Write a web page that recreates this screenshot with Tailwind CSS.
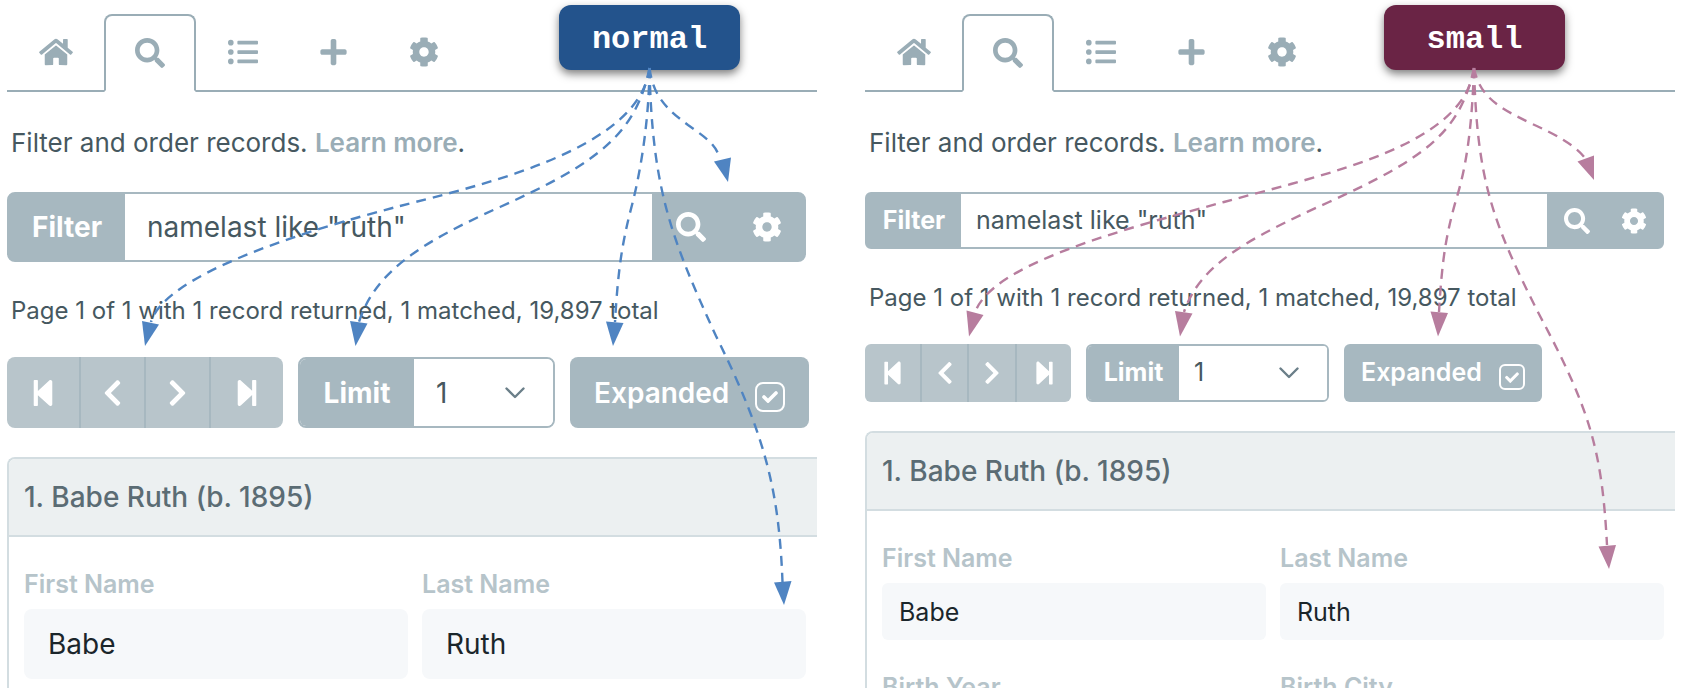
<!DOCTYPE html>
<html lang="en">
<head>
<meta charset="utf-8">
<title>Filter and order records: normal and small sizes</title>
<meta name="viewport" content="width=device-width, initial-scale=1">
<script src="https://cdn.jsdelivr.net/npm/@tailwindcss/browser@4"></script>
</head>
<body class="bg-white font-['Inter',sans-serif] text-[#465860]">

<svg class="hidden" aria-hidden="true">
  <symbol id="home" viewBox="0 0 576 512"><path d="M280.37 148.26L96 300.11V464a16 16 0 0 0 16 16l112.06-.29a16 16 0 0 0 15.92-16V368a16 16 0 0 1 16-16h64a16 16 0 0 1 16 16v95.64a16 16 0 0 0 16 16.05L464 480a16 16 0 0 0 16-16V300L295.67 148.26a12.19 12.19 0 0 0-15.3 0zM571.6 251.47L488 182.56V44.05a12 12 0 0 0-12-12h-56a12 12 0 0 0-12 12v72.61L318.47 43a48 48 0 0 0-61 0L4.34 251.47a12 12 0 0 0-1.6 16.9l25.5 31A12 12 0 0 0 45.15 301l235.22-193.74a12.19 12.19 0 0 1 15.3 0L530.9 301a12 12 0 0 0 16.9-1.6l25.5-31a12 12 0 0 0-1.7-16.93z"/></symbol>
  <symbol id="search" viewBox="0 0 512 512"><path d="M505 442.7L405.3 343c-4.5-4.5-10.6-7-17-7H372c27.6-35.3 44-79.7 44-128C416 93.1 322.9 0 208 0S0 93.1 0 208s93.1 208 208 208c48.3 0 92.7-16.4 128-44v16.3c0 6.4 2.5 12.5 7 17l99.7 99.7c9.4 9.4 24.6 9.4 33.9 0l28.3-28.3c9.4-9.4 9.4-24.6.1-34zM208 336c-70.7 0-128-57.2-128-128 0-70.7 57.2-128 128-128 70.7 0 128 57.2 128 128 0 70.7-57.2 128-128 128z"/></symbol>
  <symbol id="list" viewBox="0 0 512 512"><path d="M48 48a48 48 0 1 0 48 48 48 48 0 0 0-48-48zm0 160a48 48 0 1 0 48 48 48 48 0 0 0-48-48zm0 160a48 48 0 1 0 48 48 48 48 0 0 0-48-48zm448 16H176a16 16 0 0 0-16 16v32a16 16 0 0 0 16 16h320a16 16 0 0 0 16-16v-32a16 16 0 0 0-16-16zm0-320H176a16 16 0 0 0-16 16v32a16 16 0 0 0 16 16h320a16 16 0 0 0 16-16V80a16 16 0 0 0-16-16zm0 160H176a16 16 0 0 0-16 16v32a16 16 0 0 0 16 16h320a16 16 0 0 0 16-16v-32a16 16 0 0 0-16-16z"/></symbol>
  <symbol id="plus" viewBox="0 0 448 512"><path d="M416 208H272V64c0-17.67-14.33-32-32-32h-32c-17.67 0-32 14.33-32 32v144H32c-17.67 0-32 14.33-32 32v32c0 17.67 14.33 32 32 32h144v144c0 17.67 14.33 32 32 32h32c17.67 0 32-14.33 32-32V304h144c17.67 0 32-14.33 32-32v-32c0-17.67-14.33-32-32-32z"/></symbol>
  <symbol id="cog" viewBox="0 0 512 512"><path d="M487.4 315.7l-42.6-24.6c4.3-23.2 4.3-47 0-70.2l42.6-24.6c4.9-2.8 7.1-8.6 5.5-14-11.1-35.6-30-67.8-54.7-94.6-3.8-4.1-10-5.1-14.8-2.3L380.8 110c-17.9-15.4-38.5-27.3-60.8-35.1V25.8c0-5.6-3.9-10.5-9.4-11.7-36.7-8.2-74.3-7.8-109.2 0-5.5 1.2-9.4 6.1-9.4 11.7V75c-22.2 7.9-42.8 19.8-60.8 35.1L88.7 85.5c-4.9-2.8-11-1.9-14.8 2.3-24.7 26.7-43.6 58.9-54.7 94.6-1.7 5.4.6 11.2 5.5 14L67.3 221c-4.3 23.2-4.3 47 0 70.2l-42.6 24.6c-4.9 2.8-7.1 8.6-5.5 14 11.1 35.6 30 67.8 54.7 94.6 3.8 4.1 10 5.1 14.8 2.3l42.6-24.6c17.9 15.4 38.5 27.3 60.8 35.1v49.2c0 5.6 3.9 10.5 9.4 11.7 36.7 8.2 74.3 7.8 109.2 0 5.5-1.2 9.4-6.1 9.4-11.7v-49.2c22.2-7.9 42.8-19.8 60.8-35.1l42.6 24.6c4.9 2.8 11 1.9 14.8-2.3 24.7-26.7 43.6-58.9 54.7-94.6 1.5-5.5-.7-11.3-5.6-14.1zM256 336c-44.1 0-80-35.9-80-80s35.9-80 80-80 80 35.9 80 80-35.9 80-80 80z"/></symbol>
  <symbol id="first" viewBox="0 0 448 512"><path d="M64 468V44c0-6.6 5.4-12 12-12h48c6.6 0 12 5.4 12 12v176.4l195.5-181C352.1 22.3 384 36.6 384 64v384c0 27.4-31.9 41.7-52.5 24.6L136 292.7V468c0 6.6-5.4 12-12 12H76c-6.6 0-12-5.4-12-12z"/></symbol>
  <symbol id="prev" viewBox="0 0 320 512"><path d="M34.52 239.03L228.87 44.69c9.37-9.37 24.57-9.37 33.94 0l22.67 22.67c9.36 9.36 9.37 24.52.04 33.9L131.49 256l154.02 154.75c9.34 9.38 9.32 24.54-.04 33.9l-22.67 22.67c-9.37 9.37-24.57 9.37-33.94 0L34.52 272.97c-9.37-9.37-9.37-24.57 0-33.94z"/></symbol>
  <symbol id="next" viewBox="0 0 320 512"><path d="M285.476 272.971L91.132 467.314c-9.373 9.373-24.569 9.373-33.941 0l-22.667-22.667c-9.357-9.357-9.375-24.522-.04-33.901L188.505 256 34.484 101.255c-9.335-9.379-9.317-24.544.04-33.901l22.667-22.667c9.373-9.373 24.569-9.373 33.941 0L285.475 239.03c9.373 9.372 9.373 24.568.001 33.941z"/></symbol>
  <symbol id="last" viewBox="0 0 448 512"><path d="M384 44v424c0 6.6-5.4 12-12 12h-48c-6.6 0-12-5.4-12-12V291.6l-195.5 181C95.9 489.7 64 475.4 64 448V64c0-27.4 31.9-41.7 52.5-24.6L312 219.3V44c0-6.6 5.4-12 12-12h48c6.6 0 12 5.4 12 12z"/></symbol>
  <symbol id="down" viewBox="0 0 20 12"><path d="M1.5 1.5L10 10l8.500-8.500" fill="none" stroke="currentColor" stroke-width="2.400" stroke-linecap="round" stroke-linejoin="round"/></symbol>
  <symbol id="tick" viewBox="0 0 16 12"><path d="M2 6l4 4L14 2" fill="none" stroke="currentColor" stroke-width="3.600" stroke-linecap="round" stroke-linejoin="miter"/></symbol>
</svg>

<main class="relative flex h-screen gap-12 overflow-hidden pb-[6px] pl-[7px] pr-[7px]">

  <!-- Normal size -->
  <section class="min-w-0 flex-1 overflow-hidden pt-[14px]" aria-label="Normal size">
    <nav class="flex h-[78px] text-[#9aadb6]">
      <a href="#home" aria-label="Home" class="flex items-center border-b-2 border-current pl-8 pr-[31px]"><svg class="h-[30px] w-[34px] fill-current"><use href="#home"/></svg></a>
      <a href="#search" aria-label="Search" aria-current="page" class="flex items-center rounded-t-lg border-2 border-b-transparent border-current px-[29px]"><svg class="h-[30px] w-[30px] fill-current"><use href="#search"/></svg></a>
      <a href="#list" aria-label="List" class="flex items-center border-b-2 border-current pl-8 pr-[31px]"><svg class="h-[30px] w-[30px] fill-current"><use href="#list"/></svg></a>
      <a href="#add" aria-label="Add" class="flex items-center border-b-2 border-current px-[31px]"><svg class="h-[30px] w-[27px] fill-current"><use href="#plus"/></svg></a>
      <a href="#settings" aria-label="Settings" class="flex flex-1 items-center border-b-2 border-current px-[31px]"><svg class="h-[30px] w-[30px] fill-current"><use href="#cog"/></svg></a>
    </nav>

    <p class="mt-[31px] pl-1 text-[26px] leading-[40px]">Filter and order records. <a href="#learn" class="font-semibold text-[#9aadb6]">Learn more</a>.</p>

    <form class="mr-[11px] mt-[29px] flex h-[70px] overflow-hidden rounded-lg border-2 border-[#a7b8c0] bg-[#a7b8c0] text-[28px]">
      <label for="filter-normal" class="flex w-[116px] items-center justify-center font-bold text-white">Filter</label>
      <input id="filter-normal" type="text" value='namelast like "ruth"' class="min-w-0 flex-1 bg-white px-[22px]">
      <button type="button" aria-label="Search" class="flex w-[77px] items-center justify-center text-white"><svg class="h-[30px] w-[30px] fill-current"><use href="#search"/></svg></button>
      <button type="button" aria-label="Filter settings" class="flex w-[75px] items-center justify-center text-white"><svg class="h-[30px] w-[30px] fill-current"><use href="#cog"/></svg></button>
    </form>

    <p class="mt-[31px] pl-1 text-[24px] leading-[36px]">Page 1 of 1 with 1 record returned, 1 matched, 19,897 total</p>

    <div class="mt-[28px] flex h-[71px] gap-[15px] text-[28px]">
      <div class="flex divide-x-2 divide-[#a7b8c0] overflow-hidden rounded-lg bg-[#b8c5cb] text-white" role="group" aria-label="Pages">
        <button type="button" aria-label="First page" class="flex w-[74px] items-center justify-center"><svg class="h-[30px] w-[26px] fill-current"><use href="#first"/></svg></button>
        <button type="button" aria-label="Previous page" class="flex w-[65px] items-center justify-center"><svg class="h-[30px] w-[19px] fill-current"><use href="#prev"/></svg></button>
        <button type="button" aria-label="Next page" class="flex w-[65px] items-center justify-center"><svg class="h-[30px] w-[19px] fill-current"><use href="#next"/></svg></button>
        <button type="button" aria-label="Last page" class="flex w-[72px] items-center justify-center"><svg class="h-[30px] w-[26px] fill-current"><use href="#last"/></svg></button>
      </div>
      <div class="flex overflow-hidden rounded-lg border-2 border-[#a7b8c0]">
        <label for="limit-normal" class="flex w-[114px] items-center justify-center bg-[#a7b8c0] font-bold text-white">Limit</label>
        <div class="relative flex w-[139px] items-center bg-white">
          <select id="limit-normal" class="h-full w-full appearance-none pl-[22px]"><option>1</option><option>10</option></select>
          <svg class="pointer-events-none absolute right-7 h-3 w-5 text-[#6b7f89]"><use href="#down"/></svg>
        </div>
      </div>
      <label class="flex w-[239px] items-center justify-between rounded-lg bg-[#a7b8c0] pl-6 pr-[24px] font-semibold text-white">Expanded
        <span class="relative mt-2 flex items-center justify-center"><input type="checkbox" checked class="h-[30px] w-[30px] appearance-none rounded-lg border-2 border-white"><svg class="pointer-events-none absolute h-3 w-4"><use href="#tick"/></svg></span>
      </label>
    </div>

    <article class="mt-[29px] h-screen rounded-tl-lg border-l-2 border-t-2 border-[#d3dde1]">
      <h2 class="flex h-[78px] items-center rounded-tl-md border-b-2 border-[#d3dde1] bg-[#ecf0f1] pl-[15px] text-[28px] font-medium text-[#5b6c74]">1. Babe Ruth (b. 1895)</h2>
      <div class="grid grid-cols-2 gap-x-[14px] gap-y-[31px] pl-[15px] pr-[11px] pt-[31px]">
        <div><label for="first-normal" class="block text-[25px] font-semibold leading-8 text-[#b6c4ca]">First Name</label><input id="first-normal" type="text" readonly value="Babe" class="mt-[9px] h-[70px] w-full rounded-lg bg-[#f6f8fa] px-6 text-[28px] text-[#1b262b]"></div>
        <div><label for="last-normal" class="block text-[25px] font-semibold leading-8 text-[#b6c4ca]">Last Name</label><input id="last-normal" type="text" readonly value="Ruth" class="mt-[9px] h-[70px] w-full rounded-lg bg-[#f6f8fa] px-6 text-[28px] text-[#1b262b]"></div>
      </div>
    </article>
  </section>

  <!-- Small size -->
  <section class="min-w-0 flex-1 overflow-hidden pt-[14px]" aria-label="Small size">
    <nav class="flex h-[78px] text-[#9aadb6]">
      <a href="#home" aria-label="Home" class="flex items-center border-b-2 border-current pl-8 pr-[31px]"><svg class="h-[30px] w-[34px] fill-current"><use href="#home"/></svg></a>
      <a href="#search" aria-label="Search" aria-current="page" class="flex items-center rounded-t-lg border-2 border-b-transparent border-current px-[29px]"><svg class="h-[30px] w-[30px] fill-current"><use href="#search"/></svg></a>
      <a href="#list" aria-label="List" class="flex items-center border-b-2 border-current pl-8 pr-[31px]"><svg class="h-[30px] w-[30px] fill-current"><use href="#list"/></svg></a>
      <a href="#add" aria-label="Add" class="flex items-center border-b-2 border-current px-[31px]"><svg class="h-[30px] w-[27px] fill-current"><use href="#plus"/></svg></a>
      <a href="#settings" aria-label="Settings" class="flex flex-1 items-center border-b-2 border-current px-[31px]"><svg class="h-[30px] w-[30px] fill-current"><use href="#cog"/></svg></a>
    </nav>

    <p class="mt-[31px] pl-1 text-[26px] leading-[40px]">Filter and order records. <a href="#learn" class="font-semibold text-[#9aadb6]">Learn more</a>.</p>

    <form class="mr-[11px] mt-[29px] flex h-[57px] overflow-hidden rounded-md border-2 border-[#a7b8c0] bg-[#a7b8c0] text-[25px]">
      <label for="filter-small" class="flex w-[94px] items-center justify-center font-bold text-white">Filter</label>
      <input id="filter-small" type="text" value='namelast like "ruth"' class="min-w-0 flex-1 bg-white px-[15px]">
      <button type="button" aria-label="Search" class="flex w-[59px] items-center justify-center text-white"><svg class="h-[26px] w-[26px] fill-current"><use href="#search"/></svg></button>
      <button type="button" aria-label="Filter settings" class="flex w-[56px] items-center justify-center text-white"><svg class="h-[26px] w-[26px] fill-current"><use href="#cog"/></svg></button>
    </form>

    <p class="mt-[31px] pl-1 text-[24px] leading-[36px]">Page 1 of 1 with 1 record returned, 1 matched, 19,897 total</p>

    <div class="mt-[28px] flex h-[58px] gap-[15px] text-[25px]">
      <div class="flex divide-x-2 divide-[#a7b8c0] overflow-hidden rounded-md bg-[#b8c5cb] text-white" role="group" aria-label="Pages">
        <button type="button" aria-label="First page" class="flex w-[57px] items-center justify-center"><svg class="h-[26px] w-[23px] fill-current"><use href="#first"/></svg></button>
        <button type="button" aria-label="Previous page" class="flex w-[47px] items-center justify-center"><svg class="h-[26px] w-[16px] fill-current"><use href="#prev"/></svg></button>
        <button type="button" aria-label="Next page" class="flex w-[48px] items-center justify-center"><svg class="h-[26px] w-[16px] fill-current"><use href="#next"/></svg></button>
        <button type="button" aria-label="Last page" class="flex w-[54px] items-center justify-center"><svg class="h-[26px] w-[23px] fill-current"><use href="#last"/></svg></button>
      </div>
      <div class="flex overflow-hidden rounded-md border-2 border-[#a7b8c0]">
        <label for="limit-small" class="flex w-[91px] items-center justify-center bg-[#a7b8c0] font-bold text-white">Limit</label>
        <div class="relative flex w-[148px] items-center bg-white">
          <select id="limit-small" class="h-full w-full appearance-none pl-[15px]"><option>1</option><option>10</option></select>
          <svg class="pointer-events-none absolute right-7 h-3 w-5 text-[#6b7f89]"><use href="#down"/></svg>
        </div>
      </div>
      <label class="flex w-[198px] items-center justify-between rounded-md bg-[#a7b8c0] pl-[17px] pr-[17px] font-semibold text-white">Expanded
        <span class="relative mt-2 flex items-center justify-center"><input type="checkbox" checked class="h-[26px] w-[26px] appearance-none rounded-md border-2 border-white"><svg class="pointer-events-none absolute h-[11px] w-[14px]"><use href="#tick"/></svg></span>
      </label>
    </div>

    <article class="mt-[29px] h-screen rounded-tl-lg border-l-2 border-t-2 border-[#d3dde1]">
      <h2 class="flex h-[78px] items-center rounded-tl-md border-b-2 border-[#d3dde1] bg-[#ecf0f1] pl-[15px] text-[28px] font-medium text-[#5b6c74]">1. Babe Ruth (b. 1895)</h2>
      <div class="grid grid-cols-2 gap-x-[14px] gap-y-[31px] pl-[15px] pr-[11px] pt-[31px]">
        <div><label for="first-small" class="block text-[25px] font-semibold leading-8 text-[#b6c4ca]">First Name</label><input id="first-small" type="text" readonly value="Babe" class="mt-[9px] h-[57px] w-full rounded-md bg-[#f6f8fa] px-[17px] text-[25px] text-[#1b262b]"></div>
        <div><label for="last-small" class="block text-[25px] font-semibold leading-8 text-[#b6c4ca]">Last Name</label><input id="last-small" type="text" readonly value="Ruth" class="mt-[9px] h-[57px] w-full rounded-md bg-[#f6f8fa] px-[17px] text-[25px] text-[#1b262b]"></div>
        <div class="text-[25px] font-semibold leading-8 text-[#b6c4ca]">Birth Year</div>
        <div class="text-[25px] font-semibold leading-8 text-[#b6c4ca]">Birth City</div>
      </div>
    </article>
  </section>

  <!-- Callouts drawn over both panels -->
  <div class="absolute left-[559px] top-[5px] flex h-[65px] w-[181px] items-center justify-center rounded-xl bg-[#23538c] pt-1 font-['Liberation_Mono',monospace] text-[32px] font-bold text-white shadow-[0_4px_8px_rgba(0,0,0,0.5)]">normal</div>
  <div class="absolute left-[1384px] top-[5px] flex h-[65px] w-[181px] items-center justify-center rounded-xl bg-[#6a2445] pt-1 font-['Liberation_Mono',monospace] text-[32px] font-bold text-white shadow-[0_4px_8px_rgba(0,0,0,0.5)]">small</div>

  <svg class="pointer-events-none absolute inset-0 h-full w-full" aria-hidden="true">
    <g fill="none" stroke="#4f84c2" stroke-width="2.400" stroke-dasharray="10 7">
      <path d="M649.500 68C640 150 480 185 400 206C300 232 165 275 151 322"/>
      <path d="M649.500 68C636 133 600 162 500 207C420 243 375 272 359 322"/>
      <path d="M649.500 68C649 120 641 170 632 205C622 243 618 270 615 322"/>
      <path d="M649.500 68C652 190 672 240 716 336C765 435 779 490 782.500 582"/>
      <path d="M649.500 68C653 95 665 108 688 125C708 139 716 145 720 159"/>
    </g>
    <g fill="#4f84c2">
      <path d="M145 346L142 321L159 324.500Z"/>
      <path d="M355.500 346L350 321L367.500 323.500Z"/>
      <path d="M613 346L606 321.500L623.500 323Z"/>
      <path d="M784 605L774 582.500L791.500 581Z"/>
      <path d="M728 182L714 161.500L731 157.500Z"/>
    </g>
    <g fill="none" stroke="#b77d9e" stroke-width="2.400" stroke-dasharray="10 7">
      <path d="M1474 68C1465 145 1330 173 1224 202C1120 230 990 265 975 313"/>
      <path d="M1474 68C1460 133 1425 158 1329 202C1245 240 1200 265 1184 312"/>
      <path d="M1474 68C1472 125 1467 165 1456 200C1446 235 1442 260 1439 312"/>
      <path d="M1474 68C1477 180 1492 222 1540 316C1590 410 1602 450 1607 545"/>
      <path d="M1474 68C1480 100 1505 110 1530 123C1555 134 1575 145 1585 158"/>
    </g>
    <g fill="#b77d9e">
      <path d="M969 336.500L966.500 310.500L983.500 315Z"/>
      <path d="M1180 336.500L1175 311L1192.500 313.500Z"/>
      <path d="M1438 336.500L1430.500 311.500L1448 313Z"/>
      <path d="M1609 569L1598.500 546.500L1616 545Z"/>
      <path d="M1594 180L1577.500 161.500L1594 155.500Z"/>
    </g>
  </svg>
</main>
</body>
</html>
